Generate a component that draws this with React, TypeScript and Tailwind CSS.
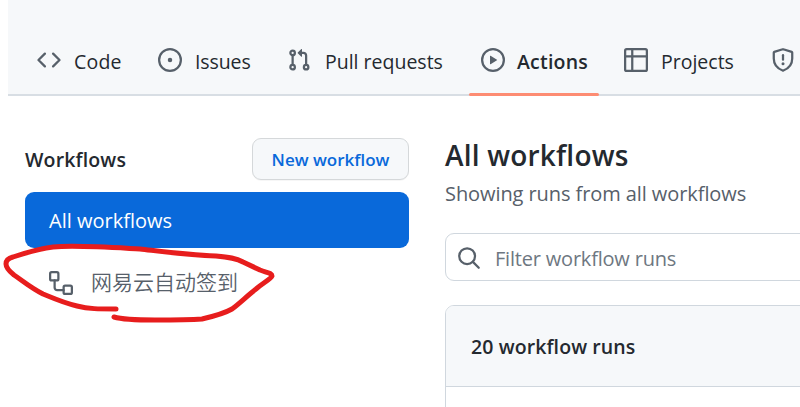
import type { ReactNode } from 'react';

function Icon({ children }: { children: ReactNode }) {
  return (
    <svg
      viewBox="0 0 16 16"
      className="h-6 w-6 shrink-0 text-[#57606a]"
      fill="none"
      stroke="currentColor"
      strokeWidth="1.5"
      strokeLinecap="round"
      strokeLinejoin="round"
    >
      {children}
    </svg>
  );
}

const CodeIcon = () => (
  <Icon>
    <path d="M5.25 3.75 1 8l4.25 4.25M10.75 3.75 15 8l-4.25 4.25" />
  </Icon>
);

const IssueIcon = () => (
  <Icon>
    <circle cx="8" cy="8" r="7.25" />
    <circle cx="8" cy="8" r="1.5" fill="currentColor" stroke="none" />
  </Icon>
);

const PullRequestIcon = () => (
  <Icon>
    <circle cx="3.75" cy="3.25" r="1.5" />
    <circle cx="3.75" cy="12.75" r="1.5" />
    <circle cx="12.75" cy="12.75" r="1.5" />
    <path d="M3.75 4.75v6.5M9.6 3.25H11A1.75 1.75 0 0 1 12.75 5v6.25" />
    <path
      d="M7.177 3.073 9.573.677A.25.25 0 0 1 10 .854v4.792a.25.25 0 0 1-.427.177L7.177 3.427a.25.25 0 0 1 0-.354Z"
      fill="currentColor"
      stroke="none"
    />
  </Icon>
);

const PlayIcon = () => (
  <Icon>
    <circle cx="8" cy="8" r="7.25" />
    <path
      d="M6.379 5.227a.25.25 0 0 0-.379.214v5.117a.25.25 0 0 0 .379.214l4.264-2.559a.25.25 0 0 0 0-.428Z"
      fill="currentColor"
      stroke="none"
    />
  </Icon>
);

const TableIcon = () => (
  <Icon>
    <rect x=".75" y=".75" width="14.5" height="14.5" rx="1" />
    <path d="M.75 5.5h14.5M5.5.75v14.5" />
  </Icon>
);

const ShieldIcon = () => (
  <Icon>
    <path d="M7.8.82a.6.6 0 0 1 .4 0l5.6 1.8c.2.06.35.25.35.46V7c0 3.5-1.75 6.4-5.9 8.02a.6.6 0 0 1-.5 0C3.6 13.4 1.85 10.5 1.85 7V3.08c0-.21.15-.4.35-.46Z" />
    <path d="M8 4.75v3" />
    <circle cx="8" cy="10.5" r="1" fill="currentColor" stroke="none" />
  </Icon>
);

const WorkflowIcon = () => (
  <Icon>
    <rect x=".75" y=".75" width="5.5" height="5.5" rx="1" />
    <rect x="9.75" y="9.75" width="5.5" height="5.5" rx="1" />
    <path d="M3.75 6.25V11A1.75 1.75 0 0 0 5.5 12.75h4.25" />
  </Icon>
);

const SearchIcon = () => (
  <Icon>
    <circle cx="6.75" cy="6.75" r="5.25" />
    <path d="m10.6 10.6 3.9 3.9" />
  </Icon>
);

export default function App() {
  return (
    <div className="relative h-[407px] w-[800px] overflow-hidden bg-white font-['Open_Sans','Noto_Sans_CJK_SC',sans-serif] text-[20px] text-[#24292f]">
      <nav className="ml-2 flex h-24 items-center overflow-hidden border-b-2 border-[#d8dee4] bg-[#f6f8fa] pt-[26px] pl-[29px] whitespace-nowrap">
        <div className="flex w-[121px] shrink-0 items-center gap-[13px]">
          <CodeIcon />
          <span className="pt-[3px] text-[19.5px] tracking-[0.2px]">Code</span>
        </div>
        <div className="flex w-[129px] shrink-0 items-center gap-[13px]">
          <IssueIcon />
          <span className="pt-[3px] text-[19.5px] tracking-[-0.1px]">Issues</span>
        </div>
        <div className="flex w-[182px] shrink-0 items-center gap-3.5">
          <PullRequestIcon />
          <span className="pt-[3px] text-[19.5px]">Pull requests</span>
        </div>
        <div className="mr-[25px] flex w-[130px] shrink-0 items-center gap-3 pl-3">
          <PlayIcon />
          <span className="pt-[3px] text-[19.5px] font-semibold tracking-[0.2px]">Actions</span>
        </div>
        <div className="flex w-[147px] shrink-0 items-center gap-[13px]">
          <TableIcon />
          <span className="pt-[3px] text-[19.5px]">Projects</span>
        </div>
        <ShieldIcon />
      </nav>
      <div className="absolute top-[93px] left-[469px] h-[3px] w-[130px] rounded-full bg-[#fd8c73]" />

      <div className="flex">
        <aside className="w-[409px] shrink-0 pt-[42px] pl-[25px]">
          <div className="flex h-[42px] items-center justify-between">
            <h2 className="pt-0.5 text-[19.5px] font-semibold tracking-[0.15px]">Workflows</h2>
            <button className="h-[42px] w-[157px] rounded-[9px] border border-[#d5d8da] bg-[#f6f8fa] pt-0.5 text-[17px] font-semibold whitespace-nowrap text-[#0969da] shadow-[0_1px_0_rgba(27,31,36,0.04)]">
              New workflow
            </button>
          </div>
          <div className="mt-3 flex h-14 items-center rounded-[9px] bg-[#0969da] pt-0.5 pl-6 text-[20px] text-white">
            All workflows
          </div>
          <div className="flex h-[70px] items-center gap-[18px] pl-6 text-[#57606a]">
            <WorkflowIcon />
            <span className="text-[21px] font-[350]">网易云自动签到</span>
          </div>
        </aside>

        <main className="ml-9 w-[370px] shrink-0 pt-[42px] whitespace-nowrap">
          <h1 className="h-9 text-[28px] leading-[34px] font-semibold tracking-[0.2px]">All workflows</h1>
          <p className="h-9 leading-10 tracking-[-0.08px] text-[#57606a]">Showing runs from all workflows</p>
          <div className="mt-[23px] flex h-12 items-center gap-3.5 rounded-[9px] border border-[#d0d7de] pt-0.5 pl-[11px] text-[#6e7781]">
            <SearchIcon />
            <span className="pt-0.5 tracking-[-0.2px]">Filter workflow runs</span>
          </div>
          <div className="mt-6 h-40 overflow-hidden rounded-[9px] border border-[#d0d7de]">
            <div className="flex h-[81px] items-center border-b border-[#d0d7de] bg-[#f6f8fa] pt-0.5 pl-[25px] text-[19.5px] font-semibold tracking-[0.1px]">
              20 workflow runs
            </div>
          </div>
        </main>
      </div>

      {/* Hand-drawn marker loop around the sidebar entry */}
      <svg
        className="absolute inset-0 h-full w-full"
        viewBox="0 0 800 407"
        fill="none"
        stroke="#e71d1d"
        strokeWidth="5"
        strokeLinecap="round"
        strokeLinejoin="round"
      >
        <path d="M116 309C98 309 89 309 77 306C64 303 55 299 43 294C31 288 23 281 14 275C9 271 6 267 6 264C6 260 9 258 13 257C25 253 39 249 53 247C75 245 104 247 140 249C166 252 188 255 216 256C229 257 236 258 243 262L260 270C268 273 272 273 272 276C271 279 263 283 256 289C247 296 240 303 232 309C225 313 215 316 202 319C188 320 174 320 155 320C139 320 124 320 114 317" />
      </svg>
    </div>
  );
}
